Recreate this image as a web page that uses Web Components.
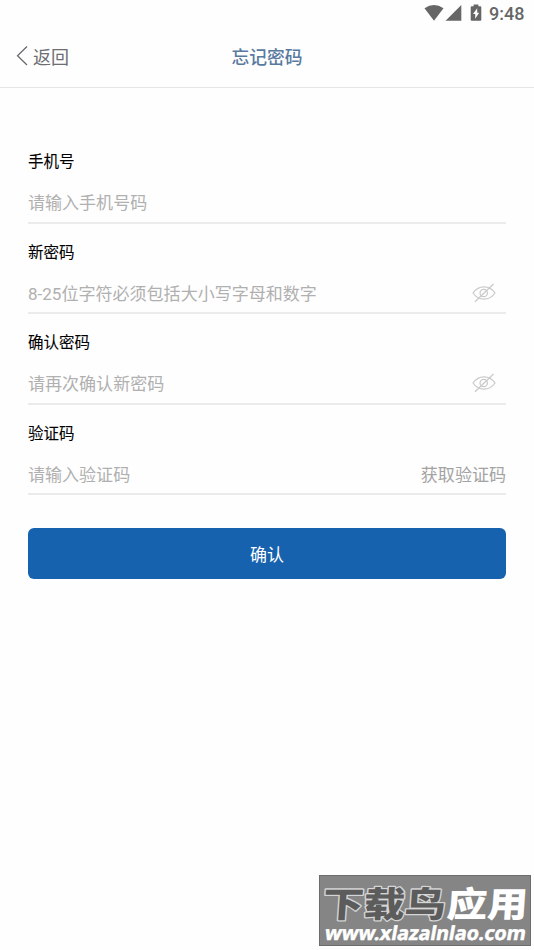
<!DOCTYPE html>
<html lang="zh-CN">
<head>
<meta charset="utf-8">
<title>忘记密码</title>
<style>
html,body{margin:0;height:100%;background:#fefefe}
body{font-family:Roboto,"Noto Sans CJK SC",sans-serif;overflow:hidden}
</style>
</head>
<body>
<reset-page></reset-page>
<script>
const define = (name, html, setup) => customElements.define(name, class extends HTMLElement {
  connectedCallback() {
    if (this.shadowRoot) return;
    const t = document.createElement('template');
    t.innerHTML = html;
    this.attachShadow({mode: 'open'}).append(t.content.cloneNode(true));
    if (setup) setup(this);
  }
});

define('status-bar', `<style>
:host{display:flex;height:27px;box-sizing:border-box;padding-right:9px;justify-content:flex-end;align-items:center;color:#666}
svg{display:block;flex:none}
span{font-size:18px;line-height:27px;font-weight:500;margin-left:7px;width:36px;white-space:nowrap}
</style>
<svg width="58" height="27" viewBox="0 0 58 27" fill="#666">
<path d="M.5 8.3Q10 1.7 19.5 8.3L10 20.7Z"/>
<path d="M37.3 5V20.7H21.6Z"/>
<path fill-rule="evenodd" d="M49.6 4.5h4.800v1.800h1.900q1 0 1 1v12.400q0 1-1 1h-8.600q-1 0-1-1V7.300q0-1 1-1h1.900ZM53.200 8.200 49 14h2.200v4.700L55.200 12.700H53.200Z"/>
</svg><span>9:48</span>`);

define('nav-bar', `<style>
:host{display:grid;grid-template-columns:1fr auto 1fr;align-items:center;height:61px;box-sizing:border-box;border-bottom:1px solid #e5e5e5;padding:0 16px}
.back{display:flex;align-items:center;font-size:18px;line-height:26px;color:#6d6d72;gap:5px;padding-bottom:3px}
.back span{padding-top:4px}
h1{margin:0;padding-top:1px;font-size:17.800px;line-height:26px;font-weight:500;color:#587a9f}
svg{display:block}
</style>
<div class="back"><svg width="12" height="20" viewBox="0 0 12 20" fill="none" stroke="#65656a" stroke-width="1.200"><path d="M11 .5 1.500 9.700 11 19"/></svg><span>返回</span></div>
<h1><slot></slot></h1><span></span>`);

define('eye-toggle', `<style>:host{display:block;margin:1px 10.500px 0 0}svg{display:block}</style>
<svg width="24" height="20" viewBox="0 0 24 20" fill="none" stroke="#c9c9c9" stroke-width="1.200"><path d="M1 10C4.500 5 8 3.800 12 3.800S19.500 5 23 10C19.500 15 16 16.200 12 16.200S4.500 15 1 10Z"/><circle cx="11.700" cy="10" r="3.700"/><path d="M21.500 1 3 18.800"/></svg>`);

define('form-field', `<style>
:host{display:flex;flex-direction:column;height:90.500px;box-sizing:border-box;padding-top:17.300px;border-bottom:2px solid #ebebeb}
label{font-size:15.500px;line-height:24px;font-weight:400;color:#000;-webkit-text-stroke:.1px #000}
.row{display:flex;align-items:center;justify-content:space-between;height:28px;margin-top:13.500px;font-size:17.050px;color:#b0b0b0}
</style><label></label><div class="row"><span class="hint"></span><slot></slot></div>`, el => {
  el.shadowRoot.querySelector('label').textContent = el.getAttribute('label');
  el.shadowRoot.querySelector('.hint').textContent = el.getAttribute('hint');
});

define('primary-button', `<style>
:host{display:block;margin-top:33px}
button{display:block;width:100%;height:51px;border:0;border-radius:6px;background:#1762ae;color:#fff;font:inherit;font-size:17px;padding:0}
</style><button><slot></slot></button>`);

define('site-mark', `<style>
:host{position:absolute;left:319px;top:875px;display:block;width:212px;height:71px}
svg{display:block}
text{font-family:"Noto Sans CJK SC",sans-serif;font-weight:900;paint-order:stroke;stroke-linejoin:round}
.url{font-family:"Noto Sans",sans-serif;font-weight:700}
</style>
<svg width="212" height="71" viewBox="0 0 212 71">
<rect width="212" height="71" fill="#858585"/><rect x=".5" y=".5" width="211" height="70" fill="none" stroke="#6c6c6c"/>
<g transform="translate(3 42) skewX(-4)">
<text x="0" y="0" font-size="35" textLength="123" lengthAdjust="spacingAndGlyphs" fill="#5c5c5c" stroke="#d5d5d5" stroke-width="2.500">下载鸟</text>
<text x="124" y="0" font-size="35" textLength="81" lengthAdjust="spacingAndGlyphs" fill="#fff">应用</text></g>
<g transform="translate(5 65) skewX(-10)"><text class="url" x="0" y="0" font-size="19.500" textLength="201" lengthAdjust="spacingAndGlyphs" fill="#fff" stroke="#fff" stroke-width=".5">www.xlazalnlao.com</text></g>
</svg>`);

define('reset-page', `<style>
:host{display:block;position:relative;height:950px;background:#fefefe}
main{display:flex;flex-direction:column;padding:45px 28px 0}
.code{color:#a3a3a3}
</style>
<status-bar></status-bar>
<nav-bar>忘记密码</nav-bar>
<main>
<form-field label="手机号" hint="请输入手机号码"></form-field>
<form-field label="新密码" hint="8-25位字符必须包括大小写字母和数字"><eye-toggle></eye-toggle></form-field>
<form-field label="确认密码" hint="请再次确认新密码"><eye-toggle></eye-toggle></form-field>
<form-field label="验证码" hint="请输入验证码"><span class="code">获取验证码</span></form-field>
<primary-button>确认</primary-button>
</main>
<site-mark></site-mark>`);
</script>
</body>
</html>
